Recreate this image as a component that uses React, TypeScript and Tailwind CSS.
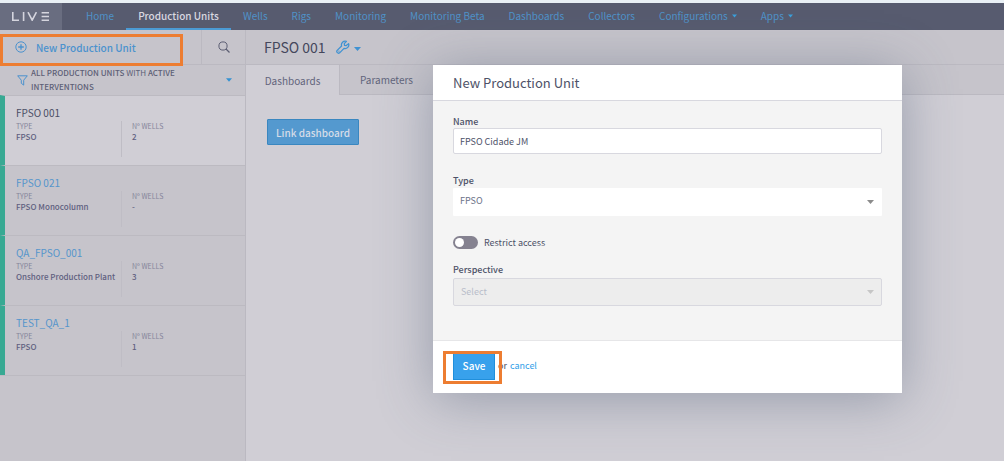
import React from 'react';

const NAV_ITEMS = [
  { label: 'Home' },
  { label: 'Production Units', active: true },
  { label: 'Wells' },
  { label: 'Rigs' },
  { label: 'Monitoring' },
  { label: 'Monitoring Beta' },
  { label: 'Dashboards' },
  { label: 'Collectors' },
  { label: 'Configurations', menu: true },
  { label: 'Apps', menu: true },
];

const UNITS = [
  { name: 'FPSO 001', type: 'FPSO', wells: '2', selected: true },
  { name: 'FPSO 021', type: 'FPSO Monocolumn', wells: '-' },
  { name: 'QA_FPSO_001', type: 'Onshore Production Plant', wells: '3' },
  { name: 'TEST_QA_1', type: 'FPSO', wells: '1' },
];

function Caret({ className = '' }: { className?: string }) {
  return (
    <svg viewBox="0 0 7 4" className={`h-1 shrink-0 ${className}`} fill="currentColor" aria-hidden="true">
      <path d="M0 0h7L3.5 4z" />
    </svg>
  );
}

function Logo() {
  return (
    <svg viewBox="0 0 38 9" className="h-[9px] w-[38px]" fill="none" stroke="#d5d5de" strokeWidth="1.6" aria-label="LIVE" role="img">
      <path d="M.8 0v8.2H7M11.6 0v9M16 .2l4.2 8L24.4.2M29.6.8H37M29.6 4.5H37M29.6 8.2H37" />
    </svg>
  );
}

function TopBar() {
  return (
    <header className="flex h-[27px] bg-[#575b6f]">
      <a href="#" className="flex w-[62px] shrink-0 items-center justify-center bg-[#696d80]">
        <Logo />
      </a>
      <nav className="ml-3 flex text-[10px] whitespace-nowrap">
        {NAV_ITEMS.map((item) => (
          <a
            key={item.label}
            href="#"
            className={
              item.active
                ? 'flex items-center border-b-2 border-b-[#4b9bd5] px-3 font-medium text-[#d9d8e0]'
                : 'flex items-center gap-1 border-b-2 border-b-transparent px-3 text-[#4f92c8]'
            }
          >
            {item.label}
            {item.menu && <Caret className="w-[5px] text-[#3ba0dc]" />}
          </a>
        ))}
      </nav>
    </header>
  );
}

function UnitCard({ unit }: { unit: (typeof UNITS)[number] }) {
  return (
    <li
      className={`flex h-[70px] flex-col border-t border-l-[5px] border-t-[#bcbac1] border-l-[#38a993] pt-[9px] pl-[11px] ${
        unit.selected ? 'bg-[#d0ced5]' : 'bg-[#c6c4cb]'
      }`}
    >
      <a href="#" className={`text-[10px] leading-4 ${unit.selected ? 'text-[#4b4f66]' : 'text-[#5595cc]'}`}>
        {unit.name}
      </a>
      <dl className="flex h-9 text-[8px] leading-[11px] font-medium whitespace-nowrap text-[#5f607f]">
        <div className="w-[106px] border-r border-[#bfbdc5]">
          <dt className="text-[7px] leading-[10px] font-normal text-[#85859a]">TYPE</dt>
          <dd>{unit.type}</dd>
        </div>
        <div className="pl-2.5">
          <dt className="text-[7px] leading-[10px] font-normal text-[#85859a]">Nº WELLS</dt>
          <dd>{unit.wells}</dd>
        </div>
      </dl>
    </li>
  );
}

function Sidebar() {
  return (
    <aside className="flex w-[246px] shrink-0 flex-col border-r border-[#bbb9c1] bg-[#c6c4cb]">
      <div className="relative flex h-[35px] border-b border-[#bbb9c1]">
        <button type="button" className="flex flex-1 items-center gap-[9px] pl-[15px] text-[10px] font-medium text-[#4b92ce]">
          <svg viewBox="0 0 12 12" className="h-3 w-3" fill="none" stroke="currentColor" aria-hidden="true">
            <circle cx="6" cy="6" r="5.2" />
            <path d="M6 3.2v5.6M3.2 6h5.6" strokeWidth="1.3" />
          </svg>
          New Production Unit
        </button>
        <button type="button" aria-label="Search" className="flex w-11 items-center justify-center border-l border-[#bbb9c1] text-[#5c5e73]">
          <svg viewBox="0 0 12 12" className="h-3 w-3" fill="none" stroke="currentColor" aria-hidden="true">
            <circle cx="5" cy="5" r="4.1" />
            <path d="M8 8l3.5 3.5" strokeWidth="1.3" />
          </svg>
        </button>
        <div className="pointer-events-none absolute top-1 left-0 h-8 w-[183px] border-3 border-[#ed7d31]" />
      </div>
      <button type="button" className="flex h-[30px] items-center pr-[13px] pl-[17px] text-left text-[#5d5f76]">
        <svg viewBox="0 0 11 11" className="mr-[3px] h-[11px] w-[11px] shrink-0" fill="none" stroke="#4b92ce" strokeLinejoin="round" aria-hidden="true">
          <path d="M.7.8h9.6L6.7 5.2v4.9L4.3 8.3V5.2z" />
        </svg>
        <span className="flex-1 text-[8px] leading-[14px] font-medium">
          ALL PRODUCTION UNITS <span className="font-normal">WITH</span> ACTIVE
          <br />
          INTERVENTIONS
        </span>
        <Caret className="w-1.5 text-[#3592d2]" />
      </button>
      <ul className="border-b border-[#bcbac1]">
        {UNITS.map((unit) => (
          <UnitCard key={unit.name} unit={unit} />
        ))}
      </ul>
    </aside>
  );
}

function Workspace() {
  return (
    <main className="flex min-w-0 flex-1 flex-col bg-[#d0ced5]">
      <div className="flex h-[35px] items-center border-b border-[#bbb9c1] bg-[#c6c4cb] pl-[18px]">
        <h1 className="text-sm text-[#44475c]">FPSO 001</h1>
        <button type="button" aria-label="Unit settings" className="ml-2.5 flex items-center gap-1 text-[#3f92d2]">
          <svg viewBox="0 0 24 24" className="h-[14px] w-[14px]" fill="none" stroke="currentColor" strokeWidth="2.2" strokeLinejoin="round" aria-hidden="true">
            <path d="M21.6 6.2l-4 3.4-3-.4-.4-3 3.6-3.8a6.4 6.4 0 0 0-8.2 8L2 17.8a3 3 0 0 0 4.2 4.2l7.6-7.6a6.4 6.4 0 0 0 7.8-8.2z" />
            <path d="M5 19h.1" strokeWidth="2.4" strokeLinecap="round" />
          </svg>
          <Caret className="mt-1 w-[7px]" />
        </button>
      </div>
      <div role="tablist" className="flex h-[30px] text-[10px] text-[#62647b]">
        <button type="button" role="tab" aria-selected="true" className="w-[93px]">
          Dashboards
        </button>
        <button type="button" role="tab" aria-selected="false" className="w-[94px] border-b border-l border-[#bbb9c1] bg-[#c6c4cb]">
          Parameters
        </button>
        <div className="flex-1 border-b border-[#bbb9c1] bg-[#c6c4cb]" />
      </div>
      <div className="px-[21px] py-6">
        <button type="button" className="block h-[26px] w-[92px] rounded-[1px] border border-[#3a87c0] bg-[#5499cf] text-[10px] leading-[23px] font-medium text-[#d5dce8]">
          Link dashboard
        </button>
      </div>
    </main>
  );
}

function NewUnitDialog() {
  return (
    <div className="absolute inset-0 flex items-start justify-end pt-[62px] pr-[102px]">
      <form
        role="dialog"
        aria-labelledby="dialog-title"
        onSubmit={(event) => event.preventDefault()}
        className="w-[469px] bg-[#f4f4f4] text-[#4d5268] shadow-[0_6px_50px_rgba(80,95,120,0.45)]"
      >
        <h2 id="dialog-title" className="border-b border-[#d8d8df] bg-white px-5 text-[13px] leading-[35px]">
          New Production Unit
        </h2>
        <div className="flex h-[239px] flex-col px-5 pt-3.5 text-[9px]">
          <label htmlFor="unit-name" className="leading-[13px] font-medium">
            Name
          </label>
          <input
            id="unit-name"
            type="text"
            defaultValue="FPSO Cidade JM"
            className="h-[26px] rounded-xs border border-[#d8d8df] bg-white px-1.5 outline-none"
          />
          <label htmlFor="unit-type" className="mt-5 leading-[13px] font-medium">
            Type
          </label>
          <div className="relative mt-px">
            <select id="unit-type" className="h-7 w-full appearance-none rounded-[1px] bg-white px-[7px] pb-0.5 text-[#6c7288] outline-none">
              <option>FPSO</option>
            </select>
            <Caret className="pointer-events-none absolute top-3 right-2 w-[7px] text-[#8b8b8b]" />
          </div>
          <label className="mt-5 flex items-center gap-1.5 leading-[13px]">
            <input
              type="checkbox"
              className="flex h-[13px] w-[25px] appearance-none items-center rounded-full bg-[#858290] px-0.5 before:h-[9px] before:w-[9px] before:rounded-full before:bg-white checked:justify-end"
            />
            Restrict access
          </label>
          <label htmlFor="unit-perspective" className="mt-3.5 leading-[13px] font-medium">
            Perspective
          </label>
          <div className="relative mt-0.5">
            <select
              id="unit-perspective"
              disabled
              className="h-7 w-full appearance-none rounded-xs border border-[#d8d8df] bg-[#ededed] px-[7px] text-[#b9bdca] opacity-100"
            >
              <option>Select</option>
            </select>
            <Caret className="pointer-events-none absolute top-3 right-2 w-[7px] text-[#c6c6c6]" />
          </div>
        </div>
        <div className="flex h-[53px] items-start gap-[3px] border-t border-[#e6e6e8] bg-white px-5 pt-3 text-[9px] leading-[25px]">
          <div className="relative">
            <button type="submit" className="block h-[27px] w-[42px] border border-[#208fdc] bg-[#38a1ec] pb-0.5 text-[10px] leading-[23px] font-medium text-white">
              Save
            </button>
            <div className="pointer-events-none absolute -top-0.5 -right-[7px] -bottom-1 -left-2.5 border-3 border-[#ed7d31]" />
          </div>
          <span>or</span>
          <a href="#" className="text-[#31a0e8]">
            cancel
          </a>
        </div>
      </form>
    </div>
  );
}

export default function App() {
  return (
    <div className="relative flex min-h-screen flex-col border-t-3 border-[#e9f0f5] font-['Noto_Sans_CJK_SC','Noto_Sans',sans-serif]">
      <TopBar />
      <div className="flex flex-1">
        <Sidebar />
        <Workspace />
      </div>
      <NewUnitDialog />
    </div>
  );
}
